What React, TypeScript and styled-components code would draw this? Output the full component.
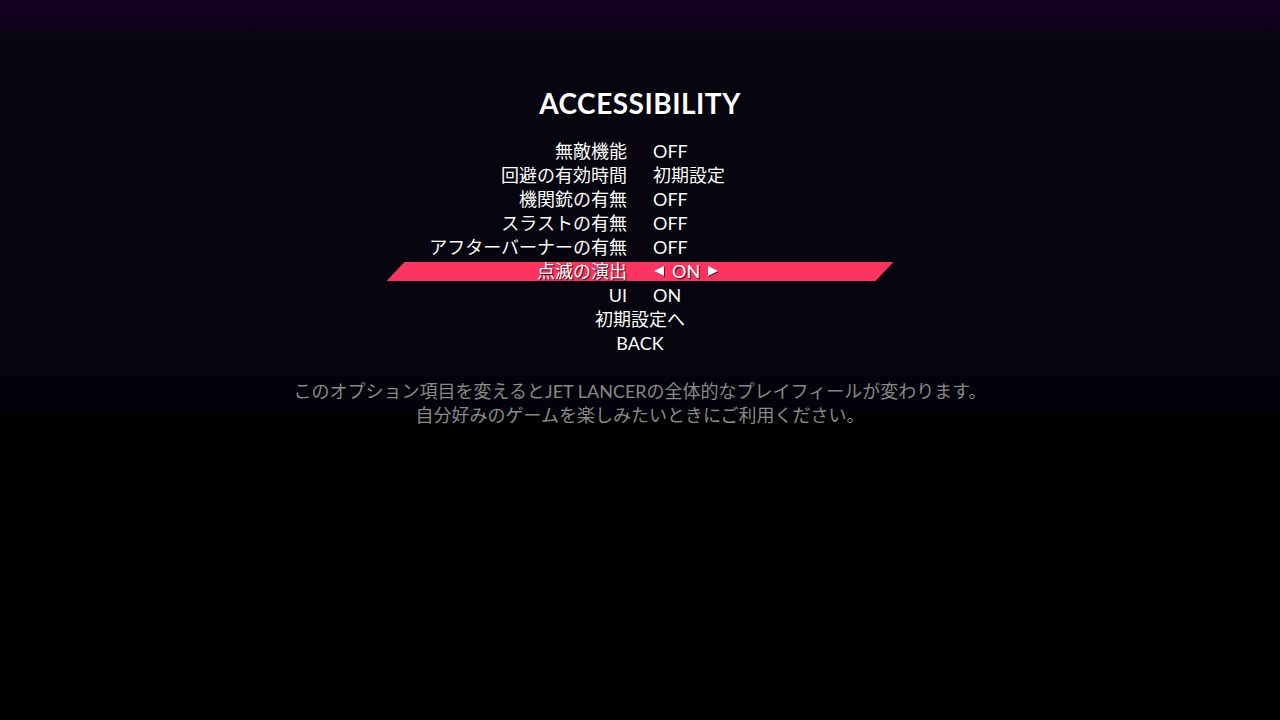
import React from "react";
import styled, { createGlobalStyle } from "styled-components";

const GlobalStyle = createGlobalStyle`
  html, body {
    margin: 0;
    padding: 0;
    background: #000;
  }
  #root {
    min-height: 720px;
  }
`;

const Screen = styled.div`
  width: 1280px;
  height: 720px;
  overflow: hidden;
  display: flex;
  flex-direction: column;
  align-items: center;
  background: linear-gradient(
    to bottom,
    #12001e 0px,
    #11001c 30px,
    #0a0812 31px,
    #0a0812 40px,
    #070510 41px,
    #06040f 375px,
    #03010b 376px,
    #03010b 414px,
    #000 415px,
    #000 100%
  );
  font-family: Lato, "Noto Sans CJK JP", sans-serif;
  color: #fff;
`;

const Title = styled.h1`
  margin: 85px 0 0;
  font-family: Lato, "Noto Sans CJK JP", sans-serif;
  font-weight: 700;
  font-size: 28px;
  line-height: 36px;
  letter-spacing: 0.5px;
  color: #fff;
  text-shadow: 1px 2px 1px rgba(0, 0, 0, 0.9);
`;

const Menu = styled.div`
  margin-top: 18px;
  width: 507px;
  display: flex;
  flex-direction: column;
`;

const Row = styled.div<{ $active?: boolean }>`
  position: relative;
  height: 24px;
  display: grid;
  grid-template-columns: 1fr 26px 1fr;
  align-items: center;
  font-family: Lato, "Noto Sans CJK JP", sans-serif;
  font-weight: 400;
  font-size: 18px;
  line-height: 24px;
  color: #fff;
  text-shadow: 1px 1px 1px rgba(0, 0, 0, 0.85);
  &::before {
    content: "";
    display: ${(p) => (p.$active ? "block" : "none")};
    position: absolute;
    left: 0;
    right: 0;
    top: 3px;
    bottom: 2px;
    background: #fe3460;
    clip-path: polygon(18px 0, 100% 0, calc(100% - 18px) 100%, 0 100%);
  }
`;

const Label = styled.span`
  position: relative;
  grid-column: 1;
  text-align: right;
  white-space: nowrap;
`;

const Value = styled.span`
  position: relative;
  grid-column: 3;
  text-align: left;
  white-space: nowrap;
  display: flex;
  align-items: center;
  gap: 7px;
`;

const Centered = styled.span`
  position: relative;
  grid-column: 1 / 4;
  text-align: center;
  white-space: nowrap;
`;

const Arrow = styled.svg`
  width: 12px;
  height: 12px;
  flex: none;
  filter: drop-shadow(1px 1px 0 rgba(0, 0, 0, 0.6));
`;

const Description = styled.p`
  margin: 24px 0 0;
  font-family: Lato, "Noto Sans CJK JP", sans-serif;
  font-weight: 400;
  font-size: 18px;
  line-height: 24px;
  text-align: center;
  color: #8a8a8a;
  text-shadow: 1px 1px 1px rgba(0, 0, 0, 0.9);
`;

const LeftArrow = () => (
  <Arrow viewBox="0 0 12 12">
    <polygon points="1,6 11,1 11,11" fill="#fff" />
  </Arrow>
);

const RightArrow = () => (
  <Arrow viewBox="0 0 12 12">
    <polygon points="11,6 1,1 1,11" fill="#fff" />
  </Arrow>
);

type Item = { label: string; value: string; active?: boolean };

const items: Item[] = [
  { label: "無敵機能", value: "OFF" },
  { label: "回避の有効時間", value: "初期設定" },
  { label: "機関銃の有無", value: "OFF" },
  { label: "スラストの有無", value: "OFF" },
  { label: "アフターバーナーの有無", value: "OFF" },
  { label: "点滅の演出", value: "ON", active: true },
  { label: "UI", value: "ON" },
];

export default function App() {
  return (
    <>
      <GlobalStyle />
      <Screen>
        <Title>ACCESSIBILITY</Title>
        <Menu>
          {items.map((it) => (
            <Row key={it.label} $active={it.active}>
              <Label>{it.label}</Label>
              <Value>
                {it.active && <LeftArrow />}
                <span>{it.value}</span>
                {it.active && <RightArrow />}
              </Value>
            </Row>
          ))}
          <Row>
            <Centered>初期設定へ</Centered>
          </Row>
          <Row>
            <Centered>BACK</Centered>
          </Row>
        </Menu>
        <Description>
          このオプション項目を変えるとJET LANCERの全体的なプレイフィールが変わります。
          <br />
          自分好みのゲームを楽しみたいときにご利用ください。
        </Description>
      </Screen>
    </>
  );
}
